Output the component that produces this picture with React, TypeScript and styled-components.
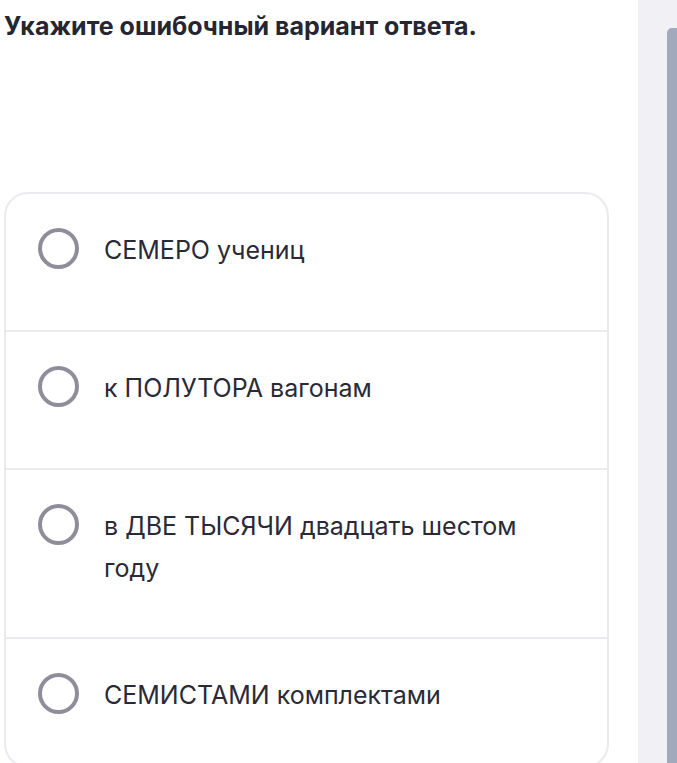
import React from 'react';
import styled, { createGlobalStyle } from 'styled-components';

const GlobalStyle = createGlobalStyle`
  html, body {
    margin: 0;
    padding: 0;
    background: #ffffff;
  }
  body {
    font-family: Inter, "Noto Sans", "Liberation Sans", sans-serif;
    color: #2a2a37;
    overflow: hidden;
  }
`;

const Page = styled.div`
  display: flex;
  min-height: 763px;
`;

const Content = styled.main`
  flex: 1;
  padding: 12px 29px 0 4px;
`;

const Question = styled.h1`
  margin: 0 0 151px;
  font-size: 25px;
  line-height: 29px;
  font-weight: 700;
  color: #262633;
`;

const Card = styled.div`
  border: 2px solid #ebebef;
  border-radius: 24px;
  overflow: hidden;
`;

const Option = styled.label`
  display: flex;
  align-items: flex-start;
  gap: 25px;
  min-height: 136px;
  box-sizing: border-box;
  padding: 35px 56px 48px 32px;
  cursor: pointer;

  & + & {
    border-top: 2px solid #ebebef;
    min-height: 138px;
  }

  &:last-child {
    min-height: 129px;
  }
`;

const Radio = styled.span`
  flex: none;
  width: 41px;
  height: 41px;
  box-sizing: border-box;
  border: 4px solid #8e8d99;
  border-radius: 50%;
  margin-top: -1px;
`;

const OptionText = styled.span`
  font-size: 25px;
  line-height: 42px;
  color: #2a2a37;
`;

const Scrollbar = styled.aside`
  width: 39px;
  background: #f0f0f5;
  display: flex;
  justify-content: flex-end;
  padding-top: 28px;
  box-sizing: border-box;
`;

const Thumb = styled.div`
  width: 10px;
  height: 760px;
  background: #a3a9bd;
  border-radius: 5px 0 0 0;
`;

const options = [
  'СЕМЕРО учениц',
  'к ПОЛУТОРА вагонам',
  'в ДВЕ ТЫСЯЧИ двадцать шестом году',
  'СЕМИСТАМИ комплектами',
];

export default function App() {
  return (
    <>
      <GlobalStyle />
      <Page>
        <Content>
          <Question>Укажите ошибочный вариант ответа.</Question>
          <Card>
            {options.map((text) => (
              <Option key={text}>
                <Radio />
                <OptionText>{text}</OptionText>
              </Option>
            ))}
          </Card>
        </Content>
        <Scrollbar>
          <Thumb />
        </Scrollbar>
      </Page>
    </>
  );
}
